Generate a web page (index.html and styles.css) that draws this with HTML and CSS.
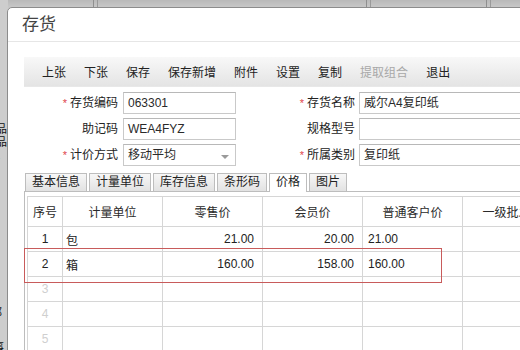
FILE: index.html
```html
<!DOCTYPE html>
<html lang="zh-CN">
<head>
<meta charset="utf-8">
<title>存货</title>
<link rel="stylesheet" href="styles.css">
</head>
<body>
<div class="desktop">
  <div class="app-top">
    <span class="sep s1"></span>
    <span class="sep s2"></span>
    <span class="sep s3"></span>
  </div>
  <div class="app-left">
    <div class="frag f1">产品<br>产品<br>加、</div>
    <div class="frag f4">上阝</div>
    <div class="frag f5">事</div>
  </div>

  <div class="dialog">
    <div class="dlg-title">存货</div>
    <div class="dlg-body">
      <div class="toolbar">
        <span class="tb">上张</span>
        <span class="tb">下张</span>
        <span class="tb">保存</span>
        <span class="tb">保存新增</span>
        <span class="tb">附件</span>
        <span class="tb">设置</span>
        <span class="tb">复制</span>
        <span class="tb disabled">提取组合</span>
        <span class="tb">退出</span>
      </div>

      <div class="form">
        <label class="lbl"><span class="req">*</span>存货编码</label>
        <div class="field">063301</div>
        <label class="lbl"><span class="req">*</span>存货名称</label>
        <div class="field wide">威尔A4复印纸</div>

        <label class="lbl">助记码</label>
        <div class="field">WEA4FYZ</div>
        <label class="lbl">规格型号</label>
        <div class="field wide"></div>

        <label class="lbl"><span class="req">*</span>计价方式</label>
        <div class="field select">移动平均<span class="arrow"></span></div>
        <label class="lbl"><span class="req">*</span>所属类别</label>
        <div class="field wide">复印纸</div>
      </div>

      <div class="tabs">
        <span class="tab">基本信息</span>
        <span class="tab">计量单位</span>
        <span class="tab">库存信息</span>
        <span class="tab">条形码</span>
        <span class="tab active">价格</span>
        <span class="tab">图片</span>
      </div>

      <div class="panel">
        <table class="grid">
          <colgroup>
            <col class="c-seq"><col class="c-w"><col class="c-w"><col class="c-w"><col class="c-w"><col class="c-w">
          </colgroup>
          <thead>
            <tr>
              <th>序号</th><th>计量单位</th><th>零售价</th><th>会员价</th><th>普通客户价</th><th>一级批发价</th>
            </tr>
          </thead>
          <tbody>
            <tr>
              <td class="seq">1</td><td class="txt">包</td><td class="num">21.00</td><td class="num">20.00</td><td class="txt2">21.00</td><td></td>
            </tr>
            <tr>
              <td class="seq">2</td><td class="txt">箱</td><td class="num">160.00</td><td class="num">158.00</td><td class="txt2">160.00</td><td></td>
            </tr>
            <tr>
              <td class="seq empty">3</td><td></td><td></td><td></td><td></td><td></td>
            </tr>
            <tr>
              <td class="seq empty">4</td><td></td><td></td><td></td><td></td><td></td>
            </tr>
            <tr>
              <td class="seq empty">5</td><td></td><td></td><td></td><td></td><td></td>
            </tr>
          </tbody>
        </table>
        <div class="highlight"></div>
      </div>
    </div>
  </div>
</div>
</body>
</html>
```

FILE: styles.css
```css
html, body {
  margin: 0;
  padding: 0;
}

body {
  width: 520px;
  height: 350px;
  overflow: hidden;
  background: #c6c6c6;
  font-family: "Liberation Sans", "Noto Sans CJK SC", sans-serif;
  font-size: 12px;
  color: #222;
}

.desktop {
  position: relative;
  width: 520px;
  height: 350px;
  overflow: hidden;
}

.app-top {
  position: absolute;
  left: 0;
  top: 0;
  width: 520px;
  height: 8px;
  background: linear-gradient(#b9b9b9, #c9c9c9);
}

.sep {
  position: absolute;
  top: 0;
  width: 3px;
  height: 8px;
  border-left: 1px solid #8f8f8f;
  border-right: 1px solid #9a9a9a;
}
.s1 { left: 93px; }
.s2 { left: 366px; }
.s3 { left: 486px; }

.app-left {
  position: absolute;
  left: 0;
  top: 0;
  width: 8px;
  height: 350px;
  background: #cdcdcd;
  overflow: hidden;
}

.frag {
  position: absolute;
  font-size: 11px;
  line-height: 12.5px;
  color: #111;
  white-space: nowrap;
}
.f1 { left: -15px; top: 123px; }
.f4 { left: -15px; top: 307px; }
.f5 { left: -7px; top: 341px; }

.dialog {
  position: absolute;
  left: 7px;
  top: 7px;
  width: 620px;
  height: 420px;
  background: #fff;
  border: 1px solid #8c8c8c;
  border-top-left-radius: 5px;
}

.dlg-title {
  height: 33px;
  line-height: 33px;
  padding-left: 14px;
  font-size: 17px;
  color: #444;
  border-bottom: 1px solid #e6e6e6;
}

.dlg-body {
  padding: 15px 0 0 16px;
}

.toolbar {
  display: flex;
  align-items: center;
  height: 30px;
  padding-left: 9px;
  background: linear-gradient(#f8f8f8, #e4e4e4);
  border-bottom: 1px solid #e8e8e8;
  box-sizing: border-box;
}

.tb {
  padding: 0 9px;
  color: #222;
  font-size: 12px;
  white-space: nowrap;
}
.tb.disabled {
  color: #a8a8a8;
}

.form {
  display: grid;
  grid-template-columns: 94px 113px 113px 200px;
  column-gap: 5px;
  row-gap: 4px;
  margin-top: 5px;
}

.form .lbl:nth-child(3),
.form .lbl:nth-child(7),
.form .lbl:nth-child(11) {
  margin-right: -1px;
}

.lbl {
  height: 22px;
  line-height: 22px;
  text-align: right;
  color: #222;
  white-space: nowrap;
}

.req {
  color: #e0464a;
  margin-right: 3px;
  font-size: 11px;
}

.field {
  position: relative;
  height: 22px;
  line-height: 21px;
  box-sizing: border-box;
  border: 1px solid #c9c9c9;
  border-top-color: #b8b8b8;
  padding-left: 4px;
  color: #2a2a2a;
  white-space: nowrap;
  background: #fff;
}

.arrow {
  position: absolute;
  right: 6px;
  top: 10px;
  width: 0;
  height: 0;
  border-left: 4px solid transparent;
  border-right: 4px solid transparent;
  border-top: 4px solid #9a9a9a;
}

.tabs {
  display: flex;
  gap: 2px;
  margin-top: 7px;
  padding-left: 1px;
  height: 18px;
  position: relative;
  z-index: 1;
}

.tab {
  height: 17px;
  line-height: 17px;
  padding: 0 6px;
  border: 1px solid #bdbdbd;
  border-bottom: none;
  background: linear-gradient(#f7f7f7, #e2e2e2);
  color: #222;
  white-space: nowrap;
}

.tab.active {
  background: #fff;
  height: 18px;
}

.panel {
  position: relative;
  border: 1px solid #bdbdbd;
  padding: 4px 0 0 2px;
  height: 200px;
}

.grid {
  border-collapse: collapse;
  table-layout: fixed;
  width: 535px;
}

.c-seq { width: 35px; }
.c-w { width: 100px; }

.grid th,
.grid td {
  border: 1px solid #d6d6d6;
  font-weight: normal;
  color: #222;
  white-space: nowrap;
  overflow: hidden;
  padding: 0;
}

.grid th {
  height: 29px;
  text-align: center;
  color: #2a2a2a;
}

.grid td {
  height: 24px;
}

.grid td.seq {
  text-align: center;
}
.grid td.seq.empty {
  color: #cfcfcf;
}
.grid td.txt {
  padding-left: 3px;
}
.grid td.num {
  text-align: right;
  padding-right: 8px;
}
.grid td.txt2 {
  padding-left: 5px;
}

.highlight {
  position: absolute;
  left: -1px;
  top: 56px;
  width: 416px;
  height: 33px;
  border: 1px solid #c85b5b;
  pointer-events: none;
}
```
